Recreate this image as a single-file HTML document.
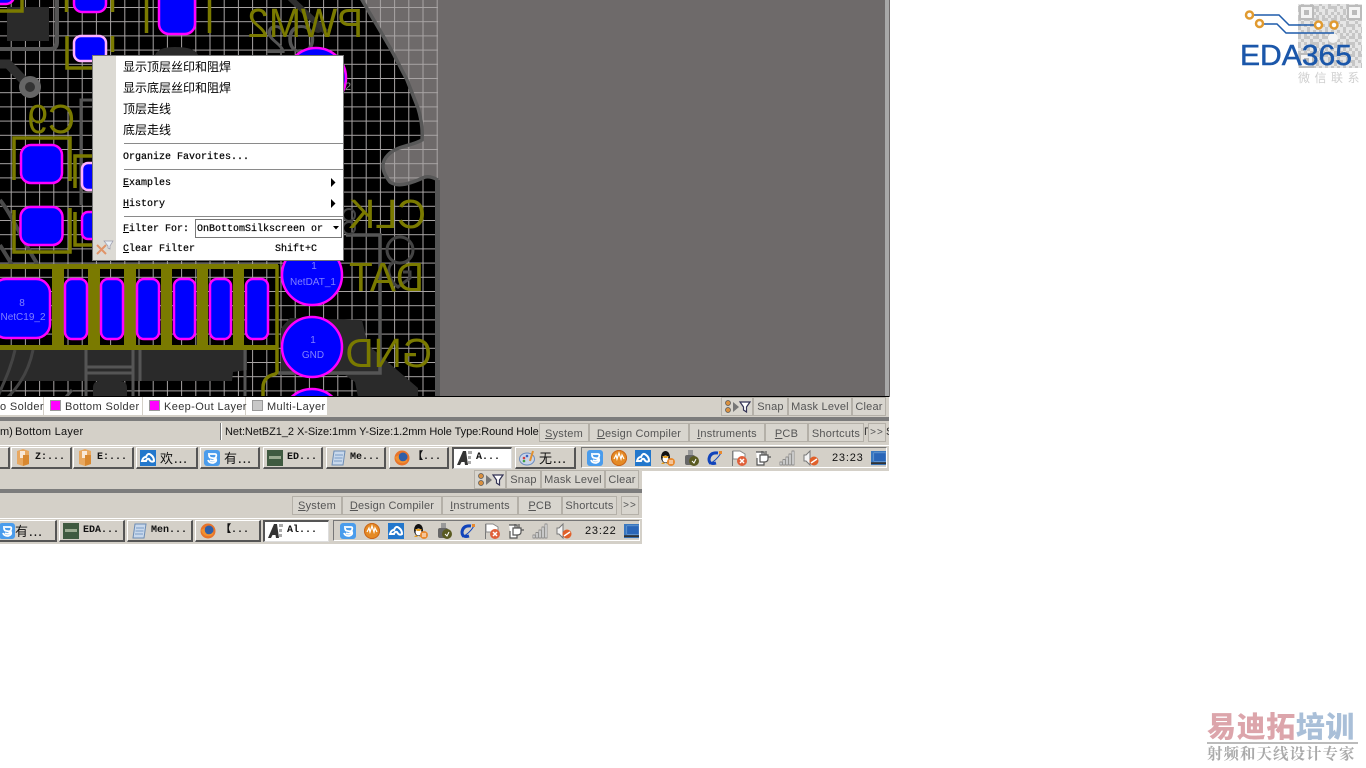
<!DOCTYPE html>
<html><head><meta charset="utf-8"><title>PCB</title>
<style>
html,body{margin:0;padding:0;background:#fff;width:1366px;height:768px;overflow:hidden}
body{position:relative;font-family:"Liberation Sans","WenQuanYi Zen Hei",sans-serif}
.a{position:absolute}
.t{position:absolute;white-space:nowrap}
.bar{position:absolute;background:#d4d0c8}
.tab{position:absolute;box-sizing:border-box;background:#d8d5ce;border:1px solid #b4b0a8;height:19px;font-size:11px;letter-spacing:.2px;color:#555;text-align:center;line-height:18px;white-space:nowrap;overflow:hidden}
.tb{position:absolute;box-sizing:border-box;height:22px;background:#d4d0c8;border-top:1px solid #fff;border-left:1px solid #fff;border-right:2px solid #555;border-bottom:2px solid #555;}
.tb.on{background:#fff;border-top:2px solid #555;border-left:2px solid #555;border-right:1px solid #ddd;border-bottom:1px solid #ddd}
.lbl{position:absolute;top:3px;font:bold 10px/14px "Liberation Mono","WenQuanYi Zen Hei",monospace;color:#111;white-space:nowrap}
.cn{font:13px/14px "WenQuanYi Zen Hei","Noto Sans CJK SC",sans-serif;letter-spacing:1px;color:#111}
.m{position:absolute;left:123px;white-space:nowrap;font:10px/12px "Liberation Mono",monospace;color:#000;-webkit-text-stroke:.2px #000}
.mc{position:absolute;left:123px;white-space:nowrap;font:12px/14px "WenQuanYi Zen Hei","Noto Sans CJK SC",sans-serif;color:#000}
.sep{position:absolute;left:124px;width:219px;height:1px;background:#8a8a8a}
.lg{position:absolute;top:400px;width:11px;height:11px;box-sizing:border-box;border:1px solid #999;background:#f0f}
.lt{position:absolute;top:400px;font-size:11px;line-height:14px;letter-spacing:.37px;color:#333;white-space:nowrap}
</style></head><body>

<svg class="a" style="left:0;top:0" width="890" height="397" viewBox="0 0 890 397">
<defs>
<pattern id="gr" x="10.7" y="7" width="14.2" height="14.2" patternUnits="userSpaceOnUse">
<path d="M.5 0V14.2M0 .5H14.2" stroke="#a8a4a4" stroke-width="1" fill="none"/>
</pattern>
</defs>
<rect width="890" height="397" fill="#6e6a6a"/>
<path d="M0 0H361C370 14 380 30 393 53L407 80L418 108C421 118 423 128 422 140C412 146 396 146 388 155C380 163 382 172 390 182C398 188 412 183 425 177C430 176 434 178 438 180V397H0Z" fill="#000"/>
<rect x="0" y="0" width="438" height="397" fill="url(#gr)"/>
<path d="M361 -2C370 14 380 30 393 53L407 80L418 108C421 118 423 128 422 140C412 146 396 146 388 155C380 163 382 172 390 182C398 188 412 183 425 177C430 176 434 178 438 180" fill="none" stroke="#585858" stroke-width="3.500"/>
<rect x="885" y="0" width="4" height="397" fill="#a8a8a8"/>

<!-- dark copper -->
<rect x="7" y="7" width="42" height="34" fill="#2a2a2a"/>
<path d="M57 0V42Q57 49 50 49H0" fill="none" stroke="#555" stroke-width="4"/>
<path d="M-2 64L8 64L30 87" fill="none" stroke="#2f2f2f" stroke-width="9"/>
<circle cx="30" cy="87" r="8" fill="#333" stroke="#666" stroke-width="6"/>
<path d="M92 100H81V205" fill="none" stroke="#555" stroke-width="3"/>
<path d="M155 55Q158 47 175 47Q195 47 198 55Z" fill="#2a2a2a"/>
<path d="M0 200C12 215 22 240 38 265M0 245L14 268" fill="none" stroke="#4a4a4a" stroke-width="4"/>
<path d="M0 350H247V370L233 372L232 381H0Z" fill="#2a2a2a"/>
<path d="M93 397V388Q93 381 100 381H120Q127 381 127 388V397Z" fill="#2a2a2a"/>
<path d="M15 350C10 372 2 385 -2 397M33 350C28 375 15 390 8 397" fill="none" stroke="#444" stroke-width="3"/>
<path d="M86 350V397M133 350V397M86 367H133M86 373H133M140 350V381M245 350V397" fill="none" stroke="#555" stroke-width="3"/>
<path d="M66 397L72 390" stroke="#555" stroke-width="3"/>
<path d="M281 328L290 318L362 320L368 345L418 388V397H358L355 382L345 375H281Z" fill="#2a2a2a"/>
<path d="M346 235H380V373H278" fill="none" stroke="#555" stroke-width="3.500"/>
<circle cx="400" cy="250" r="13" fill="none" stroke="#444" stroke-width="3"/>
<path d="M395 262C385 265 388 280 398 287L410 278V272H403" fill="none" stroke="#444" stroke-width="3"/>
<circle cx="349" cy="215" r="6" fill="none" stroke="#444" stroke-width="2"/>
<circle cx="349" cy="228" r="6" fill="none" stroke="#444" stroke-width="2"/>

<!-- Q2 mirrored -->
<text transform="translate(316,53) scale(-.95,1)" font-family="Liberation Sans" font-size="40" fill="#555">Q2</text>
<circle cx="318" cy="28" r="5" fill="#2a2a2a"/>
<path d="M290 -2L326 32" stroke="#2f2f2f" stroke-width="6"/>

<!-- olive -->
<g fill="none" stroke="#7a7a00" stroke-width="3.5">
<path d="M0 11H22V0"/>
<path d="M66.500 0V12M112.500 0V12"/>
<path d="M67 36V68H92M112.500 36V52"/>
<path d="M146.500 0V33M209.500 0V33"/>
<path d="M14 180V138H70V181"/>
<path d="M14 210V252H70V208"/>
<path d="M75 188V156H93M75 212V245H93"/>
</g>
<g fill="#7a7a00" font-family="Liberation Sans" font-size="41">
<text transform="translate(363,37) scale(-.94,1)">PWM2</text>
<text transform="translate(426,228) scale(-.97,1)">CLK</text>
<text transform="translate(424,291) scale(-.95,1)">DAT</text>
<text transform="translate(432,367) scale(-.95,1)">GND</text>
<text transform="translate(75,133) scale(-.91,1)">C9</text>
</g>

<!-- pads -->
<g fill="#00f" stroke="#f0f" stroke-width="2.500">
<rect x="-20" y="-14" width="34" height="18" rx="8"/>
<rect x="74" y="-10" width="32" height="22" rx="8"/>
<rect x="159" y="-12" width="36" height="46" rx="10"/>
<rect x="74" y="36" width="32" height="25" rx="7" stroke="#ffb0ff"/>
<circle cx="316" cy="78" r="30"/>
<rect x="21" y="145" width="41" height="38" rx="10"/>
<rect x="20.500" y="207" width="42" height="38" rx="10"/>
<rect x="82" y="163" width="20" height="27" rx="6" stroke="#ffb0ff"/>
<rect x="82" y="212" width="20" height="27" rx="6"/>
<circle cx="312" cy="275" r="30"/>
<circle cx="312" cy="347" r="30"/>
<circle cx="312" cy="419" r="30"/>
</g>
<!-- lower connector -->
<g fill="#7a7a00">
<rect x="0" y="264" width="278" height="5"/>
<rect x="0" y="345" width="278" height="5"/>
<rect x="52" y="264" width="12" height="86"/>
<rect x="88" y="264" width="12" height="86"/>
<rect x="124" y="264" width="12" height="86"/>
<rect x="161" y="264" width="11" height="86"/>
<rect x="197" y="264" width="11" height="86"/>
<rect x="233" y="264" width="11" height="86"/>
</g>
<path d="M277 265V372Q277 374 272 375Q263 378 263 388V397" fill="none" stroke="#7a7a00" stroke-width="3.500"/>
<g fill="#00f" stroke="#f0f" stroke-width="2.500">
<rect x="-8" y="279" width="58" height="59" rx="14"/>
<rect x="65" y="279" width="22" height="60" rx="7"/>
<rect x="101" y="279" width="22" height="60" rx="7"/>
<rect x="137" y="279" width="22" height="60" rx="7"/>
<rect x="174" y="279" width="21" height="60" rx="7"/>
<rect x="210" y="279" width="21" height="60" rx="7"/>
<rect x="246" y="279" width="22" height="60" rx="7"/>
</g>
<g fill="#8080ff" font-family="Liberation Sans" font-size="10" text-anchor="middle">
<text x="22" y="306">8</text><text x="23" y="320">NetC19_2</text>
<text x="314" y="269">1</text><text x="313" y="285">NetDAT_1</text>
<text x="313" y="343">1</text><text x="313" y="358">GND</text>
</g>
<text x="345" y="90" font-family="Liberation Sans" font-size="11" fill="#888">2</text>
<path d="M437.500 180V397" stroke="#555" stroke-width="5"/>
<rect x="0" y="396" width="889" height="1" fill="#000"/>
</svg>

<svg width="0" height="0" class="a" style="left:0;top:0">
<defs>
<symbol id="i-blue" viewBox="0 0 16 16"><rect width="16" height="16" rx="3" fill="#4a9cec"/><path d="M4 4H11Q13 4 12 7Q11 9 8 8Q5 8 5 5M6 10Q9 12 12 9Q13 12 9 13Q5 13 4 10" fill="none" stroke="#fff" stroke-width="1.800"/></symbol>
<symbol id="i-org" viewBox="0 0 16 16"><circle cx="8" cy="8" r="8" fill="#e58a24"/><path d="M3 9L5 5L6 9L8 3L10 9L11 5L13 9" fill="none" stroke="#fff" stroke-width="1.200"/><circle cx="8" cy="8" r="7.500" fill="none" stroke="#c8651a"/></symbol>
<symbol id="i-cloud" viewBox="0 0 16 16"><rect width="16" height="16" fill="#2277cc"/><path d="M2 11Q3 7 6 7Q8 2 11 5Q14 7 14 11Q11 13 9 9Q7 8 6 11Z" fill="none" stroke="#fff" stroke-width="2"/></symbol>
<symbol id="i-qq" viewBox="0 0 16 16"><ellipse cx="6.500" cy="7" rx="4.500" ry="6" fill="#111"/><ellipse cx="6.500" cy="9" rx="3" ry="3.500" fill="#fff"/><path d="M3 6H10L8 8H5Z" fill="#e8a020"/><path d="M2 14H6L4 12ZM7 14H11L9 12Z" fill="#e8a020"/><circle cx="12" cy="12" r="4" fill="#e88a30"/><path d="M10 11H14M10 13H14" stroke="#fff"/></symbol>
<symbol id="i-usb" viewBox="0 0 16 16"><rect x="5" y="0" width="5" height="5" fill="#999"/><rect x="2" y="5" width="10" height="10" rx="2" fill="#666"/><circle cx="11" cy="11" r="5" fill="#5a5a20"/><path d="M9 11L11 13L13 9" stroke="#fff" fill="none"/></symbol>
<symbol id="i-ie" viewBox="0 0 16 16"><path d="M11 3Q3 2 2 9Q2 15 9 13" fill="none" stroke="#1144bb" stroke-width="3"/><path d="M2 14Q9 11 14 3" fill="none" stroke="#1144bb"/><rect x="12" y="1" width="3" height="3" fill="#e88a30"/></symbol>
<symbol id="i-flag" viewBox="0 0 16 16"><path d="M1.500 1V16" stroke="#777"/><path d="M2 1H9L14 4V9H2Z" fill="#fff" stroke="#888"/><circle cx="11" cy="11" r="5" fill="#e0603a"/><path d="M9 9L13 13M13 9L9 13" stroke="#fff" stroke-width="1.500"/></symbol>
<symbol id="i-plug" viewBox="0 0 16 16"><path d="M1 2H9V15H2V8" fill="#fff" stroke="#555" stroke-width="1.200"/><path d="M5 5H13V9Q13 12 9 12H5ZM7 1V5M11 1V5M13 7H16" fill="#fff" stroke="#555" stroke-width="1.200"/></symbol>
<symbol id="i-sig" viewBox="0 0 16 16"><path d="M1 12h2v3H1zM4 9.500h2V15H4zM7 7h2v8H7zM10 4h2v11h-2zM13 1h2v14h-2z" fill="#f4f4f4" stroke="#777" stroke-width=".7"/></symbol>
<symbol id="i-spk" viewBox="0 0 16 16"><path d="M1 5H3L7 1V15L3 11H1Z" fill="#f4f4f4" stroke="#777"/><circle cx="11" cy="11" r="4.500" fill="#e0602a"/><path d="M8 13L14 9" stroke="#fff" stroke-width="1.500"/></symbol>
<symbol id="i-mon" viewBox="0 0 16 16"><rect width="16" height="15" fill="#3a78c0"/><rect x="3" y="2" width="13" height="9" fill="#2a66b8" stroke="#88b0dd" stroke-width=".5"/><rect y="12" width="16" height="2" fill="#333"/></symbol>
<symbol id="i-fold" viewBox="0 0 14 17"><path d="M1 2L7 0L13 2V15L7 17L1 15Z" fill="#e8a860"/><path d="M4 2H9V9H4Z" fill="#f8e8d8"/><path d="M7 6H13V15L7 17Z" fill="#d88830"/></symbol>
<symbol id="i-ment" viewBox="0 0 16 16"><rect width="16" height="16" fill="#3f5a40"/><rect x="2" y="6" width="12" height="3" fill="#9aaa90"/></symbol>
<symbol id="i-note" viewBox="0 0 15 16"><path d="M3 1H14L12 15H1Z" fill="#c8d8ec" stroke="#6c8cb4"/><path d="M4 5H12M3.500 8H11.500M3 11H11" stroke="#7a9cc6"/></symbol>
<symbol id="i-ff" viewBox="0 0 16 16"><circle cx="8" cy="8" r="7.500" fill="#e8742a"/><circle cx="9" cy="7" r="4.500" fill="#2f5fa8"/><path d="M1 7Q3 14 10 13Q14 12 13 9Q11 12 7 11Q4 9 5 5Z" fill="#f09030"/></symbol>
<symbol id="i-al" viewBox="0 0 16 16"><path d="M0 15L6 1H9L11 15H8L7.500 12H4.500L3 15Z" fill="#333"/><path d="M11 1h4v3h-4zM11 6h3v3h-3zM11 11h3v3h-3z" fill="#aaa"/></symbol>
<symbol id="i-pal" viewBox="0 0 17 16"><ellipse cx="8" cy="9" rx="7.500" ry="6" fill="#c9d4e8" stroke="#6a8cc0"/><circle cx="5" cy="8" r="1.300" fill="#d04040"/><circle cx="8" cy="6" r="1.300" fill="#3a60c0"/><circle cx="5" cy="11" r="1.300" fill="#40a040"/><path d="M14 1L11 11" stroke="#e09030" stroke-width="2"/></symbol>
</defs>
</svg>

<!-- legend strip -->
<div class="bar" style="left:0;top:397px;width:889px;height:20px"></div>
<div class="a" style="left:0;top:397px;width:43px;height:18px;background:#fff"></div>
<div class="a" style="left:44px;top:397px;width:98px;height:18px;background:#fff"></div>
<div class="a" style="left:143px;top:397px;width:102px;height:18px;background:#fff"></div>
<div class="a" style="left:246px;top:397px;width:81px;height:18px;background:#fff"></div>
<div class="lt" style="left:0">o Solder</div>
<div class="lg" style="left:50px"></div><div class="lt" style="left:65px">Bottom Solder</div>
<div class="lg" style="left:149px"></div><div class="lt" style="left:164px">Keep-Out Layer</div>
<div class="lg" style="left:252px;background:#c8c8c8"></div><div class="lt" style="left:267px">Multi-Layer</div>

<div class="tab" style="left:721px;top:397px;width:32px"></div>
<svg class="a" style="left:723px;top:400px" width="28" height="14"><circle cx="5" cy="3" r="2.500" fill="#d89040" stroke="#555" stroke-width=".7"/><circle cx="5" cy="10" r="2.500" fill="#d89040" stroke="#555" stroke-width=".7"/><path d="M10 2L16 7L10 12Z" fill="#777"/><path d="M17 2H27L23.500 7V12L20.500 10V7Z" fill="#fff" stroke="#335" stroke-width="1.200"/></svg>
<div class="tab" style="left:753px;top:397px;width:35px">Snap</div>
<div class="tab" style="left:788px;top:397px;width:64px">Mask Level</div>
<div class="tab" style="left:852px;top:397px;width:34px">Clear</div>

<!-- dark separator + status -->
<div class="a" style="left:0;top:417px;width:889px;height:4px;background:#7c7c7c"></div>
<div class="bar" style="left:0;top:421px;width:889px;height:24px"></div>
<div class="t" style="left:0;top:425px;font-size:11px;line-height:14px;color:#111">m)</div>
<div class="t" style="left:15px;top:425px;font-size:11px;line-height:14px;letter-spacing:.25px;color:#111">Bottom Layer</div>
<div class="a" style="left:220px;top:423px;width:1px;height:17px;background:#777;border-right:1px solid #fff"></div>
<div class="t" style="left:225px;top:425px;font-size:11px;line-height:14px;letter-spacing:-.06px;color:#111">Net:NetBZ1_2 X-Size:1mm Y-Size:1.2mm Hole Type:Round Hole</div>
<div class="tab" style="left:539px;top:423px;width:50px;line-height:20px"><u>S</u>ystem</div>
<div class="tab" style="left:589px;top:423px;width:100px;line-height:20px"><u>D</u>esign Compiler</div>
<div class="tab" style="left:689px;top:423px;width:76px;line-height:20px"><u>I</u>nstruments</div>
<div class="tab" style="left:765px;top:423px;width:43px;line-height:20px"><u>P</u>CB</div>
<div class="tab" style="left:808px;top:423px;width:56px;line-height:20px">Shortcuts</div>
<div class="t" style="left:864px;top:425px;font-size:11px;color:#333;line-height:14px">Γ</div>
<div class="tab" style="left:868px;top:423px;width:18px;font-size:10px;letter-spacing:1px">&gt;&gt;</div>
<div class="t" style="left:886px;top:425px;font-size:11px;color:#333;line-height:14px;width:3px;overflow:hidden">S</div>

<!-- upper taskbar -->
<div class="a" style="left:0;top:445px;width:889px;height:1px;background:#fff"></div>
<div class="bar" style="left:0;top:446px;width:889px;height:25px"></div>
<div class="tb" style="left:-10px;top:447px;width:20px"></div>
<div class="tb" style="left:11px;top:447px;width:61px"><svg class="a" style="left:4px;top:1px" width="14" height="17"><use href="#i-fold"/></svg><span class="lbl" style="left:23px">Z:...</span></div>
<div class="tb" style="left:73px;top:447px;width:61px"><svg class="a" style="left:4px;top:1px" width="14" height="17"><use href="#i-fold"/></svg><span class="lbl" style="left:23px">E:...</span></div>
<div class="tb" style="left:136px;top:447px;width:62px"><svg class="a" style="left:3px;top:2px" width="16" height="16"><use href="#i-cloud"/></svg><span class="lbl cn" style="left:23px">欢...</span></div>
<div class="tb" style="left:200px;top:447px;width:60px"><svg class="a" style="left:3px;top:2px" width="16" height="16"><use href="#i-blue"/></svg><span class="lbl cn" style="left:23px">有...</span></div>
<div class="tb" style="left:263px;top:447px;width:60px"><svg class="a" style="left:3px;top:2px" width="16" height="16"><use href="#i-ment"/></svg><span class="lbl" style="left:23px">ED...</span></div>
<div class="tb" style="left:326px;top:447px;width:60px"><svg class="a" style="left:4px;top:2px" width="15" height="16"><use href="#i-note"/></svg><span class="lbl" style="left:23px">Me...</span></div>
<div class="tb" style="left:389px;top:447px;width:60px"><svg class="a" style="left:4px;top:2px" width="16" height="16"><use href="#i-ff"/></svg><span class="lbl" style="left:23px">【...</span></div>
<div class="tb on" style="left:452px;top:447px;width:60px"><svg class="a" style="left:3px;top:1px" width="16" height="16"><use href="#i-al"/></svg><span class="lbl" style="left:22px;top:2px">A...</span></div>
<div class="tb" style="left:515px;top:447px;width:61px"><svg class="a" style="left:3px;top:2px" width="17" height="16"><use href="#i-pal"/></svg><span class="lbl cn" style="left:23px">无...</span></div>
<div class="a" style="left:581px;top:447px;width:306px;height:21px;box-sizing:border-box;border-top:1px solid #777;border-left:1px solid #777;border-right:1px solid #fff;border-bottom:1px solid #fff"></div>
<svg class="a" style="left:587px;top:450px" width="16" height="16"><use href="#i-blue"/></svg>
<svg class="a" style="left:611px;top:450px" width="16" height="16"><use href="#i-org"/></svg>
<svg class="a" style="left:635px;top:450px" width="16" height="16"><use href="#i-cloud"/></svg>
<svg class="a" style="left:659px;top:450px" width="16" height="16"><use href="#i-qq"/></svg>
<svg class="a" style="left:683px;top:450px" width="16" height="16"><use href="#i-usb"/></svg>
<svg class="a" style="left:707px;top:450px" width="16" height="16"><use href="#i-ie"/></svg>
<svg class="a" style="left:731px;top:450px" width="16" height="16"><use href="#i-flag"/></svg>
<svg class="a" style="left:755px;top:450px" width="16" height="16"><use href="#i-plug"/></svg>
<svg class="a" style="left:779px;top:450px" width="16" height="16"><use href="#i-sig"/></svg>
<svg class="a" style="left:803px;top:450px" width="16" height="16"><use href="#i-spk"/></svg>
<div class="t" style="left:832px;top:451px;font-size:11px;line-height:14px;letter-spacing:.8px;color:#111">23:23</div>
<svg class="a" style="left:871px;top:451px" width="15" height="15"><use href="#i-mon"/></svg>

<!-- lower window -->
<div class="bar" style="left:0;top:471px;width:642px;height:73px"></div>
<div class="tab" style="left:474px;top:470px;width:32px"></div>
<svg class="a" style="left:476px;top:473px" width="28" height="14"><circle cx="5" cy="3" r="2.500" fill="#d89040" stroke="#555" stroke-width=".7"/><circle cx="5" cy="10" r="2.500" fill="#d89040" stroke="#555" stroke-width=".7"/><path d="M10 2L16 7L10 12Z" fill="#777"/><path d="M17 2H27L23.500 7V12L20.500 10V7Z" fill="#fff" stroke="#335" stroke-width="1.200"/></svg>
<div class="tab" style="left:506px;top:470px;width:35px">Snap</div>
<div class="tab" style="left:541px;top:470px;width:64px">Mask Level</div>
<div class="tab" style="left:605px;top:470px;width:34px">Clear</div>
<div class="a" style="left:0;top:489px;width:642px;height:4px;background:#7c7c7c"></div>
<div class="tab" style="left:292px;top:496px;width:50px"><u>S</u>ystem</div>
<div class="tab" style="left:342px;top:496px;width:100px"><u>D</u>esign Compiler</div>
<div class="tab" style="left:442px;top:496px;width:76px"><u>I</u>nstruments</div>
<div class="tab" style="left:518px;top:496px;width:44px"><u>P</u>CB</div>
<div class="tab" style="left:562px;top:496px;width:55px">Shortcuts</div>
<div class="tab" style="left:621px;top:496px;width:18px;font-size:10px;letter-spacing:1px">&gt;&gt;</div>
<div class="a" style="left:0;top:518px;width:642px;height:1px;background:#fff"></div>
<div class="tb" style="left:-10px;top:520px;width:67px"><svg class="a" style="left:8px;top:2px" width="16" height="16"><use href="#i-blue"/></svg><span class="lbl cn" style="left:24px">有...</span></div>
<div class="tb" style="left:59px;top:520px;width:66px"><svg class="a" style="left:3px;top:2px" width="16" height="16"><use href="#i-ment"/></svg><span class="lbl" style="left:23px">EDA...</span></div>
<div class="tb" style="left:127px;top:520px;width:66px"><svg class="a" style="left:4px;top:2px" width="15" height="16"><use href="#i-note"/></svg><span class="lbl" style="left:23px">Men...</span></div>
<div class="tb" style="left:195px;top:520px;width:66px"><svg class="a" style="left:4px;top:2px" width="16" height="16"><use href="#i-ff"/></svg><span class="lbl" style="left:25px">【...</span></div>
<div class="tb on" style="left:263px;top:520px;width:66px"><svg class="a" style="left:3px;top:1px" width="16" height="16"><use href="#i-al"/></svg><span class="lbl" style="left:22px;top:2px">Al...</span></div>
<div class="a" style="left:333px;top:520px;width:307px;height:21px;box-sizing:border-box;border-top:1px solid #777;border-left:1px solid #777;border-right:1px solid #fff;border-bottom:1px solid #fff"></div>
<svg class="a" style="left:340px;top:523px" width="16" height="16"><use href="#i-blue"/></svg>
<svg class="a" style="left:364px;top:523px" width="16" height="16"><use href="#i-org"/></svg>
<svg class="a" style="left:388px;top:523px" width="16" height="16"><use href="#i-cloud"/></svg>
<svg class="a" style="left:412px;top:523px" width="16" height="16"><use href="#i-qq"/></svg>
<svg class="a" style="left:436px;top:523px" width="16" height="16"><use href="#i-usb"/></svg>
<svg class="a" style="left:460px;top:523px" width="16" height="16"><use href="#i-ie"/></svg>
<svg class="a" style="left:484px;top:523px" width="16" height="16"><use href="#i-flag"/></svg>
<svg class="a" style="left:508px;top:523px" width="16" height="16"><use href="#i-plug"/></svg>
<svg class="a" style="left:532px;top:523px" width="16" height="16"><use href="#i-sig"/></svg>
<svg class="a" style="left:556px;top:523px" width="16" height="16"><use href="#i-spk"/></svg>
<div class="t" style="left:585px;top:524px;font-size:11px;line-height:14px;letter-spacing:.8px;color:#111">23:22</div>
<svg class="a" style="left:624px;top:524px" width="15" height="15"><use href="#i-mon"/></svg>

<!-- context menu -->
<div class="a" style="left:92px;top:55px;width:252px;height:206px;box-sizing:border-box;background:#fff;border:1px solid #777"></div>
<div class="a" style="left:93px;top:56px;width:23px;height:204px;background:#dcdad4"></div>
<div class="mc" style="top:60px">显示顶层丝印和阻焊</div>
<div class="mc" style="top:81px">显示底层丝印和阻焊</div>
<div class="mc" style="top:102px">顶层走线</div>
<div class="mc" style="top:123px">底层走线</div>
<div class="sep" style="top:143px"></div>
<div class="m" style="top:152px">Organize Favorites...</div>
<div class="sep" style="top:169px"></div>
<div class="m" style="top:178px"><u>E</u>xamples</div>
<svg class="a" style="left:331px;top:178px" width="5" height="9"><path d="M0 0L4.500 4.500L0 9Z" fill="#000"/></svg>
<div class="m" style="top:199px"><u>H</u>istory</div>
<svg class="a" style="left:331px;top:199px" width="5" height="9"><path d="M0 0L4.500 4.500L0 9Z" fill="#000"/></svg>
<div class="sep" style="top:216px"></div>
<div class="m" style="top:224px"><u>F</u>ilter For:</div>
<div class="a" style="left:195px;top:219px;width:147px;height:19px;box-sizing:border-box;border:1px solid #777;background:#fff"></div>
<div class="m" style="left:197px;top:224px">OnBottomSilkscreen or</div>
<svg class="a" style="left:333px;top:226px" width="7" height="4"><path d="M0 0H6L3 3.500Z" fill="#000"/></svg>
<div class="m" style="top:244px"><u>C</u>lear Filter</div>
<div class="m" style="left:275px;top:244px">Shift+C</div>
<svg class="a" style="left:96px;top:240px" width="18" height="16"><path d="M1 5L10 14M1 14L10 5" stroke="#e09468" stroke-width="2"/><path d="M8 1H17L14 6V9L12 8V6Z" fill="#e8eef4" stroke="#99a" stroke-width=".7"/></svg>

<!-- EDA365 logo -->
<svg class="a" style="left:1226px;top:0" width="140" height="90" viewBox="0 0 140 90">
<defs>
<pattern id="qr" width="18" height="18" patternUnits="userSpaceOnUse"><rect width="18" height="18" fill="#e6e6e6"/><path d="M0 0h3v3H0zM6 0h6v3H6zM15 0h3v3h-3zM3 3h3v3H3zM12 3h3v3h-3zM0 6h3v6H0zM6 6h3v3H6zM12 6h6v3h-6zM3 12h3v3H3zM9 9h3v6H9zM15 12h3v3h-3zM0 15h3v3H0zM6 15h3v3H6zM12 15h3v3h-3z" fill="#c6c6c6"/></pattern>
</defs>
<rect x="72" y="4" width="64" height="64" fill="url(#qr)"/>
<g fill="#f4f4f4" stroke="#bbb" stroke-width="2"><rect x="74" y="6" width="13" height="13"/><rect x="122" y="6" width="13" height="13"/><rect x="74" y="54" width="13" height="13"/></g>
<g fill="#bbb"><rect x="78" y="10" width="5" height="5"/><rect x="126" y="10" width="5" height="5"/><rect x="78" y="58" width="5" height="5"/></g>
<circle cx="107" cy="38" r="5" fill="#f4f4f4"/>
<path d="M28 15H53L63 25H92M37 24H51L60 33H108" fill="none" stroke="#1f5cab" stroke-width="1.500"/>
<g fill="#fff" stroke="#e09a30" stroke-width="2.500"><circle cx="23.500" cy="15" r="3.500"/><circle cx="33.500" cy="23.500" r="3.500"/><circle cx="92.500" cy="25" r="3.500"/><circle cx="108" cy="25" r="3.500"/></g>
<text x="14" y="65" font-family="Liberation Sans" font-size="29" fill="#1b57aa" stroke="#1b57aa" stroke-width=".5" textLength="112" lengthAdjust="spacingAndGlyphs">EDA365</text>
<text x="72" y="82" font-family="WenQuanYi Zen Hei,Noto Sans CJK SC,sans-serif" font-size="12" fill="#cfcfcf" letter-spacing="4.500">微信联系</text>
</svg>

<!-- watermark -->
<div class="t" style="left:1207px;top:708px;font:900 29px/34px 'Noto Sans CJK SC','WenQuanYi Zen Hei',sans-serif;color:#dca5ab;letter-spacing:.6px">易迪拓<span style="color:#a9bfd8">培训</span></div>
<div class="a" style="left:1207px;top:742px;width:151px;height:2px;background:#bbb"></div>
<div class="t" style="left:1207px;top:744px;font:bold 15.500px/18px 'Noto Serif CJK SC','Noto Sans CJK SC',serif;color:#aaa;letter-spacing:1px">射频和天线设计专家</div>
</body></html>
